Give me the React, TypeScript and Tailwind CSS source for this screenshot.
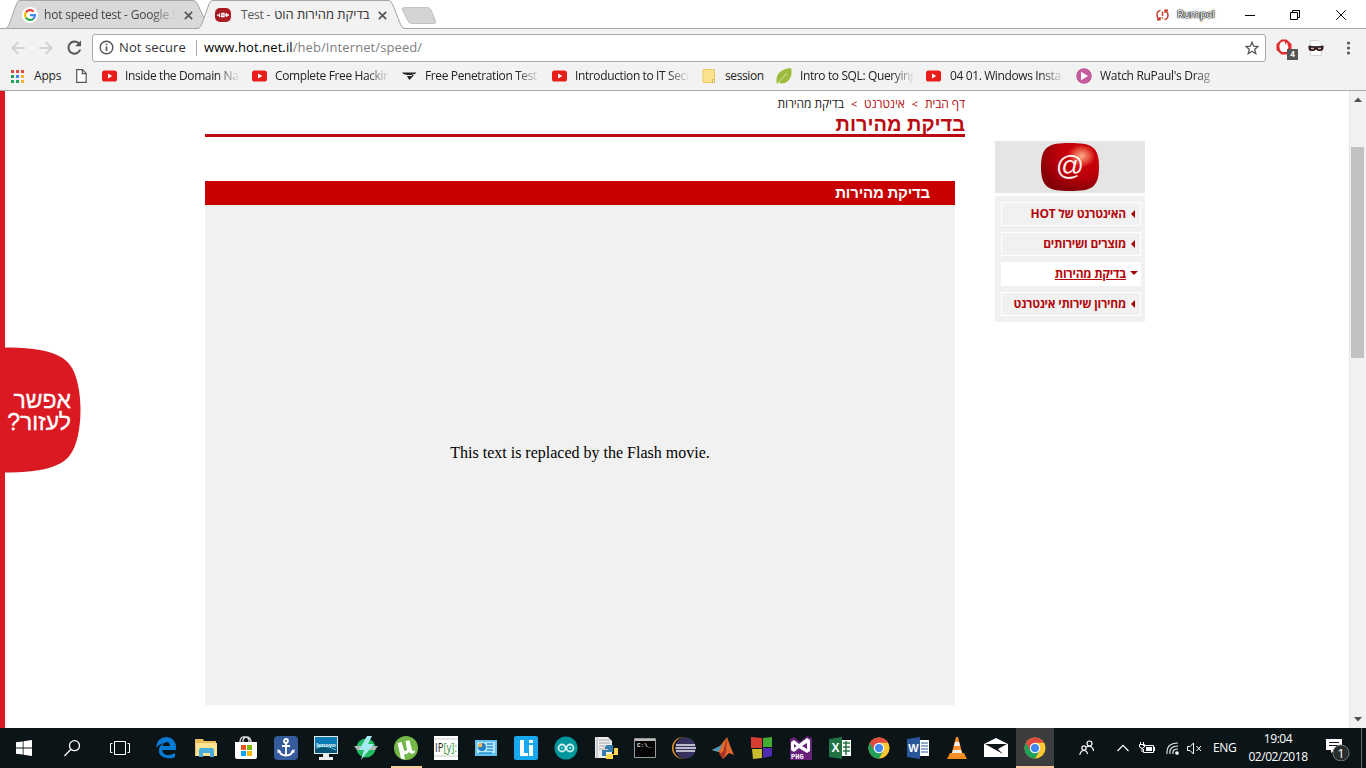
import React from "react";

const UI = "font-['Open_Sans','Noto_Sans',sans-serif]";
const HEB = "font-['Liberation_Sans',Arial,sans-serif]";

const Youtube = () => (
  <svg width="15" height="16" viewBox="0 0 15 16"><rect y="2.5" width="15" height="11" rx="2.6" fill="#e81c18" /><path d="M6 5.4v5.2L10.4 8z" fill="#fff" /></svg>
);

const Chrome = () => (
  <svg width="22" height="22" viewBox="0 0 48 48">
    <circle cx="24" cy="24" r="23" fill="#fcc934" />
    <path d="M4.100 12.500A23 23 0 0 0 24 47L34 29.800 24 24z" fill="#20a05b" />
    <path d="M4.100 12.500A23 23 0 0 1 43.900 12.500H24L14 29.800z" fill="#e04a3f" />
    <circle cx="24" cy="24" r="11.500" fill="#fff" /><circle cx="24" cy="24" r="9" fill="#4287ed" />
  </svg>
);

const Close = () => (
  <svg width="9" height="9" viewBox="0 0 9 9"><path d="M.8.8l7.4 7.4M8.2.8L.8 8.2" stroke="#555" strokeWidth="1.7" /></svg>
);

function TabStrip() {
  return (
    <header className="relative flex h-[29px] shrink-0 bg-white">
      <svg className="absolute inset-0" width="1366" height="29" viewBox="0 0 1366 29">
        <path d="M0 28.5H1366" stroke="#a6a6a6" />
        <path d="M6 28.5C8 27 9 25 10 22L16.500 4Q17.500.5 20 .5H193Q196 .5 197.500 4L205 20 202 28.5z" fill="#d9d9d9" stroke="#a6a6a6" />
        <path d="M198 29C200.500 27 201.500 25 202.500 22L209 4Q210 .5 213 .5H388Q391 .5 392.500 4L400 23Q401.500 28.5 405 29z" fill="#f2f2f2" />
        <path d="M197 28.5C200.500 28 201.500 25 202.500 22L209 4Q210 .5 213 .5H388Q391 .5 392.500 4L400 23Q401.500 28.5 405 28.5" fill="none" stroke="#a6a6a6" />
        <path d="M404.500 7.500H427.500Q430 7.500 431 10L435.500 21Q436.500 23.500 434 23.500H411.500Q409 23.500 408 21L402.500 10Q401.500 7.500 404.500 7.500z" fill="#d4d4d4" stroke="#c2c2c2" />
      </svg>
      <div className={`relative flex w-[208px] items-center pl-[22px] pt-[1px] text-[12px] text-[#444] ${UI}`}>
        <svg width="16" height="16" viewBox="0 0 16 16"><circle cx="8" cy="8" r="8" fill="#fff" /><g fill="none" strokeWidth="2.200"><path d="M3.900 5.400A5 5 0 0 1 11.600 4.500" stroke="#ea4335" /><path d="M3.900 5.400A5 5 0 0 0 3.900 10.700" stroke="#fbbc05" /><path d="M3.900 10.600A5 5 0 0 0 11.300 11.800" stroke="#34a853" /><path d="M8 8.100H13A5 5 0 0 1 11.300 11.800" stroke="#4285f4" /></g></svg>
        <span className="ml-[6px] w-[133px] overflow-hidden whitespace-nowrap tracking-[-0.2px] [mask-image:linear-gradient(to_right,#000_108px,transparent_133px)]">hot speed test - Google Search</span>
        <span className="ml-[7px]"><Close /></span>
      </div>
      <div className={`relative flex w-[200px] items-center pl-[7px] pt-[1px] text-[12px] text-[#333] ${UI}`}>
        <svg width="16" height="14" viewBox="0 0 16 14"><rect width="16" height="14" rx="5" fill="#a91b23" /><path d="M2 7.500L5 6.500M7 5.500H9V8.500H6.500zM10 7H14M11.500 5V9M4.500 5.500V9" stroke="#fff" strokeWidth="1.300" fill="none" /></svg>
        <span className="ml-[10px] flex w-[130px] items-center whitespace-nowrap"><span className="tracking-[-0.2px] text-[#555]">Test -</span><span dir="rtl" className="ml-[4px] text-[13px] tracking-[-0.05px]">בדיקת מהירות הוט</span></span>
        <span className="ml-[7px]"><Close /></span>
      </div>
      <div className={`relative ml-auto flex items-center pr-[20px] text-[11px] ${UI}`}>
        <svg width="13" height="12" viewBox="0 0 13 12" fill="none" stroke="#c5392b" strokeWidth="1.400"><path d="M4.500 1.500C0 2 0 8 3.500 10.500M1 10.700H4V8M8.500 10.500C13 10 13 4 9.500 1.500M12 1.300H9V4M6.500 2.500V7M6.500 8.300V9.700" /></svg>
        <span className="ml-[8px] w-[38px] tracking-[-0.35px] text-white [text-shadow:0_0_1px_#000,0_0_1px_#000,0_0_1px_#222,0_0_2px_#444]">Rumpel</span>
        <svg className="ml-[30px]" width="10" height="10"><path d="M0 5.500H10" stroke="#000" /></svg>
        <svg className="ml-[35px]" width="10" height="10" fill="none" stroke="#000"><path d="M.5 2.500H7.500V9.500H.5zM2.500 2.500V.5H9.500V7.500H7.500" /></svg>
        <svg className="ml-[36px]" width="10" height="10" stroke="#000"><path d="M.2.200L9.800 9.800M9.800.200L.2 9.800" /></svg>
      </div>
    </header>
  );
}

function AddressBar() {
  return (
    <div className={`flex h-[37px] shrink-0 items-center bg-[#f2f2f2] text-[14px] ${UI}`}>
      <svg className="ml-[11px]" width="14" height="14" fill="none" stroke="#ccc" strokeWidth="1.700"><path d="M14 7H1.500M7.200 1.200L1.400 7 7.200 12.800" /></svg>
      <svg className="ml-[14px]" width="14" height="14" fill="none" stroke="#ccc" strokeWidth="1.700"><path d="M0 7H12.500M6.800 1.200L12.600 7 6.800 12.800" /></svg>
      <svg className="ml-[14px]" width="15" height="15" fill="none" stroke="#555" strokeWidth="2"><path d="M12.300 4A6 6 0 1 0 13.200 9.500" /><path d="M14 .5V6.300H8.200z" fill="#555" stroke="none" /></svg>
      <div className="ml-[10px] flex h-[28px] w-[1174px] items-center rounded-[3px] border border-[#aaa] bg-white">
        <svg className="ml-[6px]" width="15" height="15" fill="none" stroke="#555" strokeWidth="1.400"><circle cx="7.500" cy="7.500" r="6.300" /><path d="M7.500 6.600V11M7.500 3.700V5.200" strokeWidth="1.700" /></svg>
        <span className="ml-[5px] w-[77px] whitespace-nowrap text-[13px] tracking-[0.1px] text-[#333]">Not secure</span>
        <span className="h-[16px] w-px bg-[#aaa]" />
        <span className="ml-[7px] whitespace-nowrap text-[13px] tracking-[0.090px] text-black">www.hot.net.il<span className="text-[#808080]">/heb/Internet/speed/</span></span>
        <svg className="ml-auto mr-[6px]" width="14" height="14" viewBox="0 0 14 14" fill="none" stroke="#555" strokeWidth="1.300"><path d="M7 1.200L8.700 5.200 13 5.500 9.700 8.300 10.800 12.700 7 10.300 3.200 12.700 4.300 8.300 1 5.500 5.300 5.200z" /></svg>
      </div>
      <div className="relative ml-[10px] h-[22px] w-[22px]">
        <svg width="22" height="22"><path d="M5.500 2.500H10.500L15.500 7V13L10.500 17.500H5.500L.5 13V7z" fill="#e22b2b" /><path d="M3.500 8Q4 5 6.500 4.500H9V8L10.500 5.500Q12 6 11.500 8L12.500 10 10.500 15H6Q3 13 3.500 8" fill="#fff" /></svg>
        <span className="absolute left-[11px] top-[12px] flex h-[11px] w-[11px] items-center justify-center bg-[#555] text-[8px] font-bold text-white">4</span>
      </div>
      <svg className="ml-[10px]" width="16" height="16"><path d="M2.500.5H10L13.500 4V15.500H2.500z" fill="#fff" stroke="#d6d6d6" /><path d="M.5 5.500Q8 7 15.500 5.500Q16 11 12.500 11H10L8 9.500 6 11H3Q0 11 .5 5.500" fill="#302020" /><path d="M3 8.500H6M10 8.500H13" stroke="#d8b7aa" strokeWidth="1.400" /></svg>
      <svg className="ml-[14px]" width="20" height="14" fill="#555"><circle cx="10.500" cy="2" r="1.600" /><circle cx="10.500" cy="7" r="1.600" /><circle cx="10.500" cy="12" r="1.600" /></svg>
    </div>
  );
}

const mark = "flex w-[150px] shrink-0 items-center";
const fade = "ml-[8px] w-[113px] overflow-hidden whitespace-nowrap [mask-image:linear-gradient(to_right,#000_92px,transparent_115px)]";

function Bookmarks() {
  return (
    <nav className={`flex h-[25px] shrink-0 items-center border-b border-[#a9a9a9] bg-[#f2f2f2] pb-[4px] text-[12px] tracking-[-0.38px] text-[#222] ${UI}`}>
      <div className="flex w-[76px] shrink-0 items-center pl-[11px]">
        <svg width="13" height="13"><g><path d="M0 0h3v3H0zM5 0h3v3H5zM10 0h3v3h-3z" fill="#df4a3e" /><path d="M0 5h3v3H0zM0 10h3v3H0zM5 10h3v3H5z" fill="#21a05c" /><path d="M5 5h3v3H5z" fill="#4a83ed" /><path d="M10 5h3v3h-3zM10 10h3v3h-3z" fill="#f2b52c" /></g></svg>
        <span className="ml-[10px] tracking-[-0.2px]">Apps</span>
      </div>
      <svg className="mr-[15px] shrink-0" width="11" height="14" fill="#fff" stroke="#555" strokeWidth="1.200"><path d="M.7.7H6.500L10.200 4.400V13.300H.7zM6.300.7V4.600H10.200" /></svg>
      <div className={mark}><Youtube /><span className={fade}>Inside the Domain Name System</span></div>
      <div className={mark}><Youtube /><span className={fade}>Complete Free Hacking Course</span></div>
      <div className={mark}><svg width="15" height="14"><path d="M0 3.500H14.500L13 5H9.500L12 6 7.500 11 5 7.500 7 6.500 1.500 5z" fill="#252525" /><path d="M5.500 6.500H10" stroke="#f2f2f2" /></svg><span className={fade}>Free Penetration Testing</span></div>
      <div className={mark}><Youtube /><span className={fade}>Introduction to IT Security</span></div>
      <div className="flex w-[74px] shrink-0 items-center"><svg width="13" height="14"><path d="M1 .5H12.500V13.500H1z" fill="#fde28d" stroke="#e6c969" /><path d="M10.500 10.500H12.500V13.500H10.500z" fill="#fff0b8" stroke="#dcb957" /></svg><span className="ml-[10px]">session</span></div>
      <div className={mark}><svg width="16" height="16"><path d="M15 0Q17 8 12 13Q8 17 2.500 14.500L1 16Q-1 9 4 4Q8 .5 15 0" fill="#9dbb3d" /><path d="M2 15L11 5" stroke="#d8e6a9" /></svg><span className={fade}>Intro to SQL: Querying Data</span></div>
      <div className={mark}><Youtube /><span className={`${fade} pl-px`}>04 01. Windows Installation</span></div>
      <div className={mark}><svg width="16" height="16"><circle cx="8" cy="8" r="7.800" fill="#c45b9b" /><path d="M5 3.700V12.300L12 8z" fill="#fff" /></svg><span className="ml-[8px] w-[111px] overflow-hidden whitespace-nowrap tracking-[-0.3px] [mask-image:linear-gradient(to_right,#000_94px,transparent_120px)]">Watch RuPaul's Drag Race</span></div>
    </nav>
  );
}

const links = [
  { text: "האינטרנט של HOT", open: false },
  { text: "מוצרים ושירותים", open: false },
  { text: "בדיקת מהירות", open: true },
  { text: "מחירון שירותי אינטרנט", open: false },
];

function Page() {
  return (
    <main className={`relative flex h-[637px] shrink-0 border-l-[5px] border-[#da1923] bg-white ${HEB}`}>
      <div className="ml-[200px] w-[760px]">
        <div dir="rtl" className={`flex h-[22px] items-center gap-[7px] pt-[4px] text-[12px] tracking-[-0.1px] text-[#b4090c] ${UI}`}>
          <span>דף הבית</span><span className="text-[11px]">&gt;</span><span>אינטרנט</span><span className="text-[11px]">&gt;</span><span className="text-[#222]">בדיקת מהירות</span>
        </div>
        <h1 dir="rtl" className="h-[24px] border-b-[3px] border-[#b90b10] text-[20px] font-bold leading-[22px] text-[#b90b10]">בדיקת מהירות</h1>
        <section className="mt-[44px] h-[524px] w-[750px] bg-[#f1f1f1]">
          <h2 dir="rtl" className="h-[24px] bg-[#c80000] pr-[25px] text-[15px] font-bold leading-[24px] tracking-[-0.2px] text-white">בדיקת מהירות</h2>
          <div className="flex h-[500px] items-center justify-center pb-[4px] font-['Liberation_Serif',serif] text-[16px] text-black">This text is replaced by the Flash movie.</div>
        </section>
      </div>
      <aside className="ml-[30px] mt-[50px] w-[150px]">
        <div className="flex h-[52px] items-center justify-center bg-[#e5e5e5]">
          <svg width="60" height="50" viewBox="0 0 60 50">
            <defs><radialGradient id="glow" cx=".7" cy=".27" r=".75"><stop offset="0" stopColor="#ffad90" /><stop offset=".2" stopColor="#e34434" /><stop offset=".32" stopColor="#c9000b" /><stop offset=".6" stopColor="#b80009" /><stop offset="1" stopColor="#850007" /></radialGradient></defs>
            <path d="M30 1C51 1 59 4 59 25S51 49 30 49 1 46 1 25 9 1 30 1" fill="url(#glow)" />
            <text x="30" y="33" textAnchor="middle" fontFamily="Liberation Sans" fontSize="28" fill="#fff0ee">@</text>
          </svg>
        </div>
        <nav className={`mt-[3px] flex h-[126px] flex-col gap-[6px] bg-[#f1f1f1] pl-[6px] pr-[4px] pt-[6px] tracking-[-0.25px] ${UI}`}>
          {links.map((link) => (
            <a key={link.text} dir="rtl" className={link.open ? "flex h-[24px] items-center bg-white pr-[3px] text-[12px] font-bold text-[#b4090c]" : "flex h-[24px] items-center border border-white pr-[4px] text-[12px] font-bold text-[#b4090c]"}>
              {link.open
                ? <svg width="8" height="8"><path d="M0 1H8L4 5z" fill="#a40000" /></svg>
                : <svg width="6" height="8"><path d="M5 0V8L1 4z" fill="#a40000" /></svg>}
              <span className={link.open ? "mr-[4px] underline" : "mr-[4px]"}>{link.text}</span>
            </a>
          ))}
        </nav>
      </aside>
      <div className="ml-auto flex w-[17px] flex-col items-center border-l border-[#e8e8e8] bg-[#f1f1f1] pr-px">
        <svg className="mt-[6px]" width="8" height="5"><path d="M0 5L4 .5 8 5z" fill="#505050" /></svg>
        <div className="mt-[45px] h-[211px] w-[13px] bg-[#c1c1c1]" />
        <svg className="mb-[6px] mt-auto" width="8" height="5"><path d="M0 0L4 4.500 8 0z" fill="#505050" /></svg>
      </div>
      <div className="absolute left-[-5px] top-[256px] h-[126px] w-[81px]">
        <svg className="absolute inset-0" width="81" height="126"><path d="M0 .5C37 0 61 5 70 18C84 36 84 90 70 108C61 121 37 126 0 125.500z" fill="#da1923" /></svg>
        <div dir="rtl" className="relative whitespace-nowrap pr-[10px] pt-[42px] text-[23px] leading-[22px] text-white [-webkit-text-stroke:0.300px_white]">אפשר<br />לעזור?</div>
      </div>
    </main>
  );
}

const taskIcons: React.ReactNode[] = [
  <svg width="22" height="24" viewBox="0 0 22 24"><path d="M1 12Q2 1 12 1Q21 2 21 12V14H7Q8 19 13 19Q17 19 20 17V21Q17 23 12 22Q3 21 4 13Q5 9 9 7Q4 8 1 12M7.500 10H15Q15 6 11 6Q8 7 7.500 10" fill="#087bd4" fillRule="evenodd" /></svg>,
  <svg width="22" height="20"><path d="M0 1H8L9 3H21V18H0z" fill="#e9bd59" /><path d="M1 5H22V18H1z" fill="#ffe393" /><path d="M4 19V12Q4 10 6 10H17Q19 10 19 12V19H15V15H8V19z" fill="#48addc" /></svg>,
  <svg width="24" height="24"><path d="M6 8V5Q7 0 11 1Q16 0 17 5V8M9 7V4Q10 1 12 1Q14 1 15 4V7" fill="none" stroke="#ddd" strokeWidth="1.300" /><path d="M1 6H23V21Q23 23 21 23H3Q1 23 1 21z" fill="#fff" /><path d="M7 9h5v5H7z" fill="#f05022" /><path d="M13 9h5v5h-5z" fill="#7fb900" /><path d="M7 15h5v5H7z" fill="#00a3ee" /><path d="M13 15h5v5h-5z" fill="#feb800" /></svg>,
  <svg width="24" height="24"><rect width="24" height="24" rx="4" fill="#355b9d" /><g fill="none" stroke="#fff" strokeWidth="1.800"><circle cx="12" cy="5" r="2" /><path d="M12 7V20M8 10H16M5 14Q6 19.500 12 19.500Q18 19.500 19 14" /></g><path d="M3.500 13l4 3-4 1zM20.500 13l-4 3 4 1z" fill="#fff" /></svg>,
  <svg width="24" height="24"><path d="M0 0H24V18H0z" fill="#e2e8ea" /><path d="M1 1H23V17H1z" fill="#087bb4" /><path d="M1 11Q10 8 23 12V17H1z" fill="#035477" /><path d="M2 12Q12 8 22 14" stroke="#59d5e6" fill="none" /><text x="12" y="11" textAnchor="middle" fontSize="6" fontWeight="bold" fontFamily="Liberation Sans" fill="#fff">lenovo</text><path d="M9 18h6v3h4v3H5v-3h4z" fill="#eee" /></svg>,
  <svg width="24" height="24"><circle cx="12" cy="12" r="9.500" fill="#22bd5e" /><path d="M0 10H24L21 14H3z" fill="#aebcb4" /><path d="M13 0H18L14 8H20L7 24 10 14H5z" fill="#a5eaf0" /></svg>,
  <svg width="24" height="24"><circle cx="12" cy="12" r="12" fill="#73b746" /><path d="M3.500 7L7.500 6 10 14Q11 16 13 14L11.500 5 15.500 4.200 18 14Q19 16 21 14L20.500 17Q17 19 15 16Q13 19 10 18L11 23.500 7 22.500z" fill="#fff" /></svg>,
  <svg width="24" height="24"><path d="M0 0H24V24H0z" fill="#fff" /><path d="M0 3H24M0 20H24" stroke="#ccc" /><text x="1" y="16" fontSize="12" fontFamily="Open Sans" fill="#222" textLength="22" lengthAdjust="spacingAndGlyphs">IP<tspan fill="#39943a">[y]:</tspan></text></svg>,
  <svg width="22" height="18"><path d="M0 1H22V17H0z" fill="#61bfec" /><path d="M2 3H20V14H2z" fill="#b6e7fc" /><circle cx="7" cy="8" r="4" fill="#2680c5" /><path d="M7 8V4A4 4 0 0 0 3 8z" fill="#ffb748" /><path d="M12 8H18M12 5H18M12 11H18M4 14H17" stroke="#2b94d3" strokeWidth="1.500" /></svg>,
  <svg width="24" height="24"><rect width="24" height="24" rx="2" fill="#18a8ef" /><path d="M6 4H10V17H14V20H6zM15 9H19V20H15zM15 4H19V7H15z" fill="#fff" /></svg>,
  <svg width="24" height="24"><circle cx="12" cy="12" r="11.500" fill="#00979c" /><circle cx="8" cy="12" r="3.500" fill="none" stroke="#d4f0f0" strokeWidth="1.800" /><circle cx="16" cy="12" r="3.500" fill="none" stroke="#d4f0f0" strokeWidth="1.800" /><path d="M7 12H9M15 12H17M16 11V13" stroke="#d4f0f0" /></svg>,
  <svg width="24" height="24"><path d="M1 1H14L18 5V22H1z" fill="#ededed" /><path d="M3 1V22M5 4H16M5 7H16M5 10H16M5 13H16" stroke="#aaa" /><path d="M13 9H19V16H12V20H8V14H14V13H11V11z" fill="#367bad" /><path d="M20 12H24V19H19V23H12V18H20z" fill="#ffd64d" /></svg>,
  <svg width="22" height="20"><path d="M.5.5H21.500V19.500H.5z" fill="#050505" stroke="#999" /><path d="M1 2H21" stroke="#bbb" strokeWidth="2" /><text x="3" y="9" fontSize="6" fontFamily="Liberation Mono" fontWeight="bold" fill="#eee">C:\_</text></svg>,
  <svg width="24" height="24"><circle cx="11" cy="12" r="11" fill="#f39a21" /><circle cx="12.500" cy="12" r="11" fill="#111b1e" /><circle cx="13.500" cy="12" r="10.500" fill="#36315f" /><path d="M4 9H23M3.500 12H24M4 15H23" stroke="#e8e7ef" strokeWidth="1.600" /></svg>,
  <svg width="24" height="24"><path d="M1 14L9 10 16 1Q19 10 23 19L18 17 12 23 8 16z" fill="#e2692c" /><path d="M1 14L9 10 12 8 7 16z" fill="#479bbd" /><path d="M16 1L12 16 8 18 12 23 15 17z" fill="#a83324" /></svg>,
  <svg width="22" height="24"><path d="M0 1L11 2V12H0z" fill="#d73c31" /><path d="M12 2L21 1V11H12z" fill="#44ac35" /><path d="M1 13H11V22L2 23z" fill="#c9bb2b" /><path d="M12 12H21V20L12 22z" fill="#4e2cb2" /></svg>,
  <svg width="24" height="24"><path d="M1 3L5 1 11 6 18 0 23 2V24H1z" fill="#68217a" /><path d="M2 6L5 4 10 8 18 2 21 4V15L18 17 10 12 5 16 2 14zM5 8V12L7.500 10zM18 7L13 10 18 13z" fill="#fff" fillRule="evenodd" /><text x="2" y="23" fontSize="7" fontWeight="bold" fill="#fff" fontFamily="Liberation Mono">PHG</text></svg>,
  <svg width="24" height="24"><path d="M13 4H23V20H13z" fill="#fff" /><path d="M15 7H22M15 11H22M15 15H22M18 5V19" stroke="#267344" strokeWidth="1.500" /><path d="M1 3L14 1V23L1 21z" fill="#217346" /><text x="7.500" y="16" textAnchor="middle" fontSize="12" fontWeight="bold" fill="#fff" fontFamily="Liberation Sans">X</text></svg>,
  <Chrome />,
  <svg width="24" height="24"><path d="M13 4H23V20H13z" fill="#fff" /><path d="M15 7H22M15 10H22M15 13H22M15 16H22" stroke="#2b579a" /><path d="M1 3L14 1V23L1 21z" fill="#2b579a" /><text x="7.500" y="16" textAnchor="middle" fontSize="11" fontWeight="bold" fill="#fff" fontFamily="Liberation Sans">W</text></svg>,
  <svg width="22" height="24"><path d="M4 17H18L21 23H1z" fill="#ee8c17" /><path d="M10 1H12L17 20Q11 23 5 20z" fill="#f7912c" /><path d="M9 6H13L14 10H8zM7 14H15L16 17H6z" fill="#eee" /></svg>,
  <svg width="24" height="24"><path d="M0 8L12 2 24 8V21H0z" fill="#fff" /><path d="M1 8H23L14 13 19 18 10 13z" fill="#101719" /></svg>,
  <Chrome />,
];

function Taskbar() {
  return (
    <footer className={`flex h-[40px] shrink-0 bg-[#0b1417] text-white ${UI}`}>
      <div className="flex w-[48px] items-center justify-center"><svg width="16" height="16" fill="#fff"><path d="M0 2.300L6.700 1.400V7.500H0zM7.500 1.200L16 0V7.500H7.500zM0 8.500H6.700V14.600L0 13.700zM7.500 8.500H16V16L7.500 14.800z" /></svg></div>
      <div className="flex w-[48px] items-center justify-center"><svg width="16" height="17" fill="none" stroke="#fff" strokeWidth="1.300"><circle cx="10.500" cy="5.700" r="5" /><path d="M6.700 9.500L.4 16" /></svg></div>
      <div className="flex w-[50px] items-center justify-center pr-[2px]"><svg width="20" height="14" fill="none" stroke="#fff"><path d="M4.500.5H15.500V13.500H4.500zM2.500 2.500H.5V11.500H2.500M17.500 2.500H19.500V11.500H17.500" /></svg></div>
      {taskIcons.map((icon, i) => (
        <div key={i} className={i === 22 ? "flex w-[38px] items-center justify-center border-b-2 border-[#f7cd9f] bg-[#3b3d3e] pt-[2px]" : i < 12 ? "flex w-[40px] items-center justify-center" : "flex w-[39px] items-center justify-center pr-px"}>
          {i === 6 ? <div className="flex h-full w-[31px] items-center justify-center border-b-2 border-[#f7cd9f] pt-[2px]">{icon}</div> : icon}
        </div>
      ))}
      <div className="flex flex-1 items-center">
        <svg className="ml-[25px]" width="16" height="16" fill="none" stroke="#fff" strokeWidth="1.200"><circle cx="10.500" cy="3.500" r="2.500" /><circle cx="5" cy="8" r="2.200" /><path d="M.8 15Q1.500 10.500 5 10.500Q8 10.500 8.500 14M7.500 7Q10 5.500 12.500 7Q14.500 8.500 14.500 11" /></svg>
        <svg className="ml-[22px]" width="12" height="8" fill="none" stroke="#fff" strokeWidth="1.200"><path d="M.5 7L6 1.300 11.500 7" /></svg>
        <svg className="ml-[10px]" width="17" height="12" fill="none" stroke="#fff"><path d="M4 3.500H14.500V10.500H4.500V7M15.500 5V9M1.500 0V3M4.500 0V3M.5 2.500H5.500V5L3 6.500 .5 5zM3 6V10" /><path d="M7 5H13V9H7z" fill="#fff" stroke="none" /></svg>
        <svg className="ml-[10px]" width="14" height="13" fill="none" stroke="#eee" strokeWidth="1.100"><path d="M1 12Q0 1 12 1M4 12Q3 4 12 4M7 12Q6 7 12 7" /><circle cx="11" cy="11" r="1.300" fill="#fff" /></svg>
        <svg className="ml-[7px]" width="15" height="13" fill="none" stroke="#fff"><path d="M.5 4.500H3L6.500 1V12L3 8.500H.5zM9.500 4L14 9M14 4L9.500 9" /></svg>
        <span className="ml-[11px] w-[24px] text-[12px] tracking-[-0.4px]">ENG</span>
        <div className="ml-[9px] w-[64px] whitespace-nowrap text-center text-[12px] leading-[18px] tracking-[-0.45px]">19:04<br />02/02/2018</div>
        <div className="relative ml-[15px] h-[26px] w-[26px]">
          <svg width="26" height="26"><path d="M1 4H17V15H10L6 18V15H1z" fill="#fff" /><path d="M4 7.500H14M4 10.500H14" stroke="#17191a" /><circle cx="16" cy="18" r="8" fill="#292d2e" stroke="#737777" /></svg>
          <span className="absolute left-[12px] top-[9px] w-[8px] text-center text-[13px] leading-[18px]">1</span>
        </div>
        <span className="ml-auto mr-[4px] h-full w-px bg-[#656b6d]" />
      </div>
    </footer>
  );
}

export default function App() {
  return (
    <div className="flex h-[768px] w-[1366px] flex-col overflow-hidden">
      <TabStrip />
      <AddressBar />
      <Bookmarks />
      <Page />
      <Taskbar />
    </div>
  );
}
